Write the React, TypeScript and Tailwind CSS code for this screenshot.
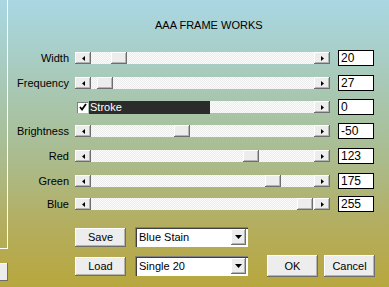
import React from "react";

const raised =
  "bg-[#ededed] shadow-[inset_-1px_-1px_0_#6e6e6e,inset_1px_1px_0_#ffffff,inset_-2px_-2px_0_#b4b4b4]";

const track =
  "bg-[repeating-conic-gradient(#fbfbfb_0_25%,#ececec_0_50%)] bg-[length:2px_2px]";

function LeftArrow() {
  return (
    <div className={`w-[16px] h-[12px] flex items-center justify-center ${raised}`}>
      <svg width="3" height="5" viewBox="0 0 3 5">
        <polygon points="3,0 3,5 0,2.5" fill="#000" />
      </svg>
    </div>
  );
}

function RightArrow() {
  return (
    <div className={`w-[16px] h-[12px] flex items-center justify-center ${raised}`}>
      <svg width="3" height="5" viewBox="0 0 3 5">
        <polygon points="0,0 0,5 3,2.5" fill="#000" />
      </svg>
    </div>
  );
}

function ValueBox({ value }: { value: string }) {
  return (
    <div className="ml-[8px] w-[36px] h-[16px] bg-white border border-black flex items-center pl-[2px] text-[12px] leading-none text-black">
      {value}
    </div>
  );
}

function SliderRow({
  label,
  value,
  thumb,
  mt,
}: {
  label: string;
  value: string;
  thumb: number;
  mt: string;
}) {
  return (
    <div className={`flex items-center h-[16px] ${mt}`}>
      <div className="w-[61px] text-right text-[11px] leading-none text-black">{label}</div>
      <div className="ml-[6px] flex w-[255px] h-[12px]">
        <LeftArrow />
        <div className={`relative flex-1 h-[12px] ${track}`}>
          <div
            className={`absolute top-0 w-[16px] h-[12px] ${raised}`}
            style={{ left: thumb }}
          />
        </div>
        <RightArrow />
      </div>
      <ValueBox value={value} />
    </div>
  );
}

function Combo({ text }: { text: string }) {
  return (
    <div className="w-[113px] h-[20px] bg-white flex items-center shadow-[inset_1px_1px_0_#808080,inset_2px_2px_0_#404040,inset_-1px_-1px_0_#ffffff] pl-[4px] pr-[2px]">
      <span className="flex-1 text-[11px] leading-none text-black">{text}</span>
      <div className={`w-[15px] h-[16px] flex items-center justify-center ${raised}`}>
        <svg width="7" height="4" viewBox="0 0 7 4">
          <polygon points="0,0 7,0 3.5,4" fill="#000" />
        </svg>
      </div>
    </div>
  );
}

function Button({ text, cls }: { text: string; cls: string }) {
  return (
    <div className={`${cls} flex items-center justify-center text-[11px] leading-none text-black ${raised}`}>
      {text}
    </div>
  );
}

export default function App() {
  const rows = [
    { label: "Width", value: "20", thumb: 20, mt: "mt-0" },
    { label: "Frequency", value: "27", thumb: 6, mt: "mt-[9px]" },
  ];
  const rows2 = [
    { label: "Brightness", value: "-50", thumb: 83, mt: "mt-[8px]" },
    { label: "Red", value: "123", thumb: 152, mt: "mt-[9px]" },
    { label: "Green", value: "175", thumb: 174, mt: "mt-[9px]" },
    { label: "Blue", value: "255", thumb: 206, mt: "mt-[7px]" },
  ];
  return (
    <div
      className="w-[389px] h-[287px] overflow-hidden flex bg-[linear-gradient(180deg,#a9d7e3_0%,#a8cbbd_25%,#a8c19e_45%,#adb881_62%,#b4ad5c_80%,#b8a73e_100%)]"
      style={{ fontFamily: '"Liberation Sans", Arial, sans-serif' }}
    >
      <div className="w-[8px] flex flex-col">
        <div className="h-[249px] border-r border-b border-white" />
        <div className="mt-[14px] h-[18px] bg-[#ededed] shadow-[inset_-1px_-1px_0_#6e6e6e,inset_0_1px_0_#ffffff]" />
      </div>
      <div className="flex-1 flex flex-col">
        <div className="pt-[20px] pl-[147px] h-[36px] text-[11px] leading-none text-black">
          AAA FRAME WORKS
        </div>
        <div className="mt-[14px] flex flex-col">
          {rows.map((r) => (
            <SliderRow key={r.label} {...r} />
          ))}
          <div className="flex items-center h-[16px] mt-[8px]">
            <div className="w-[61px]" />
            <div className="ml-[6px] flex items-center w-[255px] h-[13px]">
              <div className="ml-[2px] w-[11px] h-[11px] bg-white flex items-center justify-center shadow-[inset_1px_1px_0_#808080,inset_-1px_-1px_0_#ffffff]">
                <svg width="8" height="8" viewBox="0 0 8 8">
                  <polyline points="1,4 3,6.5 7,1" fill="none" stroke="#000" strokeWidth="1.8" />
                </svg>
              </div>
              <div className="ml-[1px] w-[121px] h-[13px] bg-[#2b2b2b] text-white text-[11px] leading-none flex items-center pl-[1px]">
                Stroke
              </div>
              <div className={`flex-1 h-[12px] ${track}`} />
              <RightArrow />
            </div>
            <ValueBox value="0" />
          </div>
          {rows2.map((r) => (
            <SliderRow key={r.label} {...r} />
          ))}
        </div>
        <div className="mt-[15px] flex items-center h-[20px] pl-[67px]">
          <Button text="Save" cls="w-[51px] h-[19px]" />
          <div className="ml-[9px]">
            <Combo text="Blue Stain" />
          </div>
        </div>
        <div className="mt-[8px] flex items-center h-[22px] pl-[67px]">
          <Button text="Load" cls="w-[51px] h-[19px]" />
          <div className="ml-[9px]">
            <Combo text="Single 20" />
          </div>
          <Button text="OK" cls="ml-[19px] w-[51px] h-[22px]" />
          <Button text="Cancel" cls="ml-[6px] w-[51px] h-[22px]" />
        </div>
      </div>
    </div>
  );
}
